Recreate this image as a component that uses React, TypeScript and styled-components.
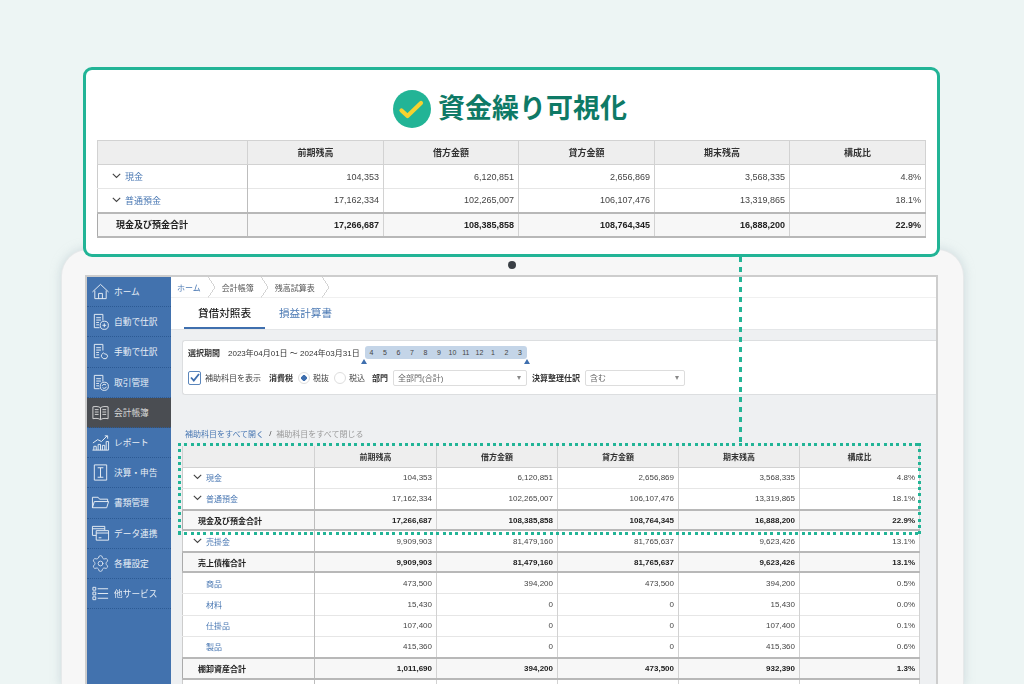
import styled, { createGlobalStyle } from 'styled-components';
import { Settings } from 'lucide-react';

const FONT = '"Liberation Sans", "Noto Sans CJK JP", sans-serif';
const TEAL = '#22b496';
const BLUE = '#4a78b3';

type Row = {
  kind: 'sub' | 'item' | 'total';
  label: string;
  values: string[];
};

const HEADERS = ['前期残高', '借方金額', '貸方金額', '期末残高', '構成比'];

const ROWS: Row[] = [
  { kind: 'sub', label: '現金', values: ['104,353', '6,120,851', '2,656,869', '3,568,335', '4.8%'] },
  { kind: 'sub', label: '普通預金', values: ['17,162,334', '102,265,007', '106,107,476', '13,319,865', '18.1%'] },
  { kind: 'total', label: '現金及び預金合計', values: ['17,266,687', '108,385,858', '108,764,345', '16,888,200', '22.9%'] },
  { kind: 'sub', label: '売掛金', values: ['9,909,903', '81,479,160', '81,765,637', '9,623,426', '13.1%'] },
  { kind: 'total', label: '売上債権合計', values: ['9,909,903', '81,479,160', '81,765,637', '9,623,426', '13.1%'] },
  { kind: 'item', label: '商品', values: ['473,500', '394,200', '473,500', '394,200', '0.5%'] },
  { kind: 'item', label: '材料', values: ['15,430', '0', '0', '15,430', '0.0%'] },
  { kind: 'item', label: '仕掛品', values: ['107,400', '0', '0', '107,400', '0.1%'] },
  { kind: 'item', label: '製品', values: ['415,360', '0', '0', '415,360', '0.6%'] },
  { kind: 'total', label: '棚卸資産合計', values: ['1,011,690', '394,200', '473,500', '932,390', '1.3%'] },
];

const MONTHS = [4, 5, 6, 7, 8, 9, 10, 11, 12, 1, 2, 3];

const NavSvg = styled('svg')`
  flex: 0 0 19px;
  width: 19px;
  height: 19px;
`;

const GearIcon = styled(Settings)`
  flex: 0 0 19px;
`;

function Svg({ children }: { children: React.ReactNode }) {
  return (
    <NavSvg viewBox="0 0 20 20" fill="none" stroke="currentColor" strokeWidth="1">
      {children}
    </NavSvg>
  );
}

const DOC = 'M12.5 9V2.5h-9v14h5.5M5.5 6h5M5.5 8.5h5M5.5 11h3M5.5 13.5h3';

const NAV: { label: string; icon: React.ReactNode }[] = [
  {
    label: 'ホーム',
    icon: (
      <Svg>
        <path d="M1.5 10.5 10 2.5l8.5 8M4 9v8.5h12V9M8 17.5V12h4v5.5" />
      </Svg>
    ),
  },
  {
    label: '自動で仕訳',
    icon: (
      <Svg>
        <path d={DOC} />
        <circle cx="14" cy="14" r="4.3" />
        <path d="M14 12v4M12 14h4" />
      </Svg>
    ),
  },
  {
    label: '手動で仕訳',
    icon: (
      <Svg>
        <path d={DOC} />
        <path d="M11 13.5l2-2 1.5 1 2 .5 1 2-1.5 2.5h-3l-2-2z" />
      </Svg>
    ),
  },
  {
    label: '取引管理',
    icon: (
      <Svg>
        <path d={DOC} />
        <circle cx="14" cy="14" r="4.3" />
        <path d="M11.8 13.5a2.3 2.3 0 0 1 4-.8M16.2 14.5a2.3 2.3 0 0 1-4 .8" />
      </Svg>
    ),
  },
  {
    label: '会計帳簿',
    icon: (
      <Svg>
        <path d="M10 5C8 3.5 5 3.5 2 4v12.5c3-.5 6-.5 8 1 2-1.5 5-1.5 8-1V4c-3-.5-6-.5-8 1zM10 5v12.5" />
        <path d="M4 7h4M4 9.5h4M4 12h4M12 7h4M12 9.5h4M12 12h4" />
      </Svg>
    ),
  },
  {
    label: 'レポート',
    icon: (
      <Svg>
        <path d="M1.5 18h17M3 18v-4h2.5v4M7.5 18v-6H10v6M12 18v-5h2.5v5M16 18V9h2.5v9" />
        <path d="M2 10.5l5-3.5 4 2 6-6M14.5 3H17.5V6" />
      </Svg>
    ),
  },
  {
    label: '決算・申告',
    icon: (
      <Svg>
        <path d="M3.5 2h13v16h-13zM7 5h6M10 5v10M7 15h6" />
      </Svg>
    ),
  },
  {
    label: '書類管理',
    icon: (
      <Svg>
        <path d="M1.5 15.5V4.5h6l1.5 2h8.5V9M1.5 15.5l2-6.5h15l-2 6.5z" />
      </Svg>
    ),
  },
  {
    label: 'データ連携',
    icon: (
      <Svg>
        <path d="M14.5 6.5V2.5h-13v9.5h4M1.5 5h13" />
        <path d="M5.5 7h13v10h-13zM5.5 9.5h13M8 14.5h3" />
      </Svg>
    ),
  },
  {
    label: '各種設定',
    icon: <GearIcon size={19} strokeWidth={1} />,
  },
  {
    label: '他サービス',
    icon: (
      <Svg>
        <path d="M2 3.5h3v3H2zM2 8.5h3v3H2zM2 13.5h3v3H2zM7 5h11M7 10h11M7 15h11" />
      </Svg>
    ),
  },
];

const COLS_LARGE = [150, 136, 135, 136, 135, 136];
const COLS_SMALL = [132, 122, 121, 121, 121, 120];

function BalanceTable({ rows, large, extraRow }: { rows: Row[]; large?: boolean; extraRow?: boolean }) {
  return (
    <Table $large={large}>
      <colgroup>
        {(large ? COLS_LARGE : COLS_SMALL).map((w, i) => (
          <Col key={i} $w={w} />
        ))}
      </colgroup>
      <thead>
        <tr>
          <Head $large={large} />
          {HEADERS.map((h) => (
            <Head key={h} $large={large}>
              {h}
            </Head>
          ))}
        </tr>
      </thead>
      <tbody>
        {rows.map((r) => (
          <BodyRow key={r.label} $large={large} $total={r.kind === 'total'}>
            <LabelCell $kind={r.kind} $large={large}>
              {r.kind === 'sub' && (
                <Chevron viewBox="0 0 9 6" fill="none" stroke="#444" strokeWidth="1.1">
                  <path d="M.8 .8 4.5 4.5 8.2 .8" />
                </Chevron>
              )}
              {r.label}
            </LabelCell>
            {r.values.map((v, i) => (
              <Value key={i}>{v}</Value>
            ))}
          </BodyRow>
        ))}
        {extraRow && (
          <BodyRow $large={large}>
            <LabelCell $kind="item" />
            {HEADERS.map((h) => (
              <Value key={h} />
            ))}
          </BodyRow>
        )}
      </tbody>
    </Table>
  );
}

export default function App() {
  return (
    <Stage>
      <GlobalStyle />
      <Laptop>
        <Camera />
        <Screen>
          <Sidebar>
            {NAV.map((n) => (
              <NavItem key={n.label} $active={n.label === '会計帳簿'}>
                {n.icon}
                <span>{n.label}</span>
              </NavItem>
            ))}
          </Sidebar>
          <Content>
            <Breadcrumb>
              <Crumb $link>ホーム</Crumb>
              <CrumbArrow />
              <Crumb>会計帳簿</Crumb>
              <CrumbArrow />
              <Crumb>残高試算表</Crumb>
              <CrumbArrow />
            </Breadcrumb>
            <Tabs>
              <Tab $active>貸借対照表</Tab>
              <Tab>損益計算書</Tab>
            </Tabs>
            <Body>
              <Filter>
                <FilterRow>
                  <Strong>選択期間</Strong>
                  <Period>2023年04月01日 〜 2024年03月31日</Period>
                  <Slider>
                    {MONTHS.map((m) => (
                      <Month key={m}>{m}</Month>
                    ))}
                    <Handle $side="left" />
                    <Handle $side="right" />
                  </Slider>
                </FilterRow>
                <OptionRow>
                  <CheckBox>
                    <svg width="10" height="9" viewBox="0 0 10 9" fill="none" stroke="#3f6fae" strokeWidth="1.8">
                      <path d="M1 4.5 3.8 7.5 9 1" />
                    </svg>
                  </CheckBox>
                  <OptionLabel>補助科目を表示</OptionLabel>
                  <TaxLabel>消費税</TaxLabel>
                  <Radio $on />
                  <OptionLabel>税抜</OptionLabel>
                  <Radio />
                  <OptionLabel>税込</OptionLabel>
                  <DeptLabel>部門</DeptLabel>
                  <Select $w={134}>
                    全部門(合計)
                    <Caret />
                  </Select>
                  <Strong>決算整理仕訳</Strong>
                  <Select $w={100} $last>
                    含む
                    <Caret />
                  </Select>
                </OptionRow>
              </Filter>
              <Links>
                <LinkText>補助科目をすべて開く</LinkText>
                <Slash>/</Slash>
                <MutedLink>補助科目をすべて閉じる</MutedLink>
              </Links>
              <BalanceTable rows={ROWS} extraRow />
            </Body>
          </Content>
        </Screen>
      </Laptop>

      <Connector />
      <DottedBox />

      <Callout>
        <Title>
          <svg width="38" height="38" viewBox="0 0 38 38">
            <circle cx="19" cy="19" r="19" fill={TEAL} />
            <path
              d="M8.5 20.5 14.5 26 28 13"
              fill="none"
              stroke="#f6d22f"
              strokeWidth="4.2"
              strokeLinecap="round"
              strokeLinejoin="round"
            />
          </svg>
          <TitleText>資金繰り可視化</TitleText>
        </Title>
        <SoftTable>
          <BalanceTable rows={ROWS.slice(0, 3)} large />
        </SoftTable>
      </Callout>
    </Stage>
  );
}

const GlobalStyle = createGlobalStyle`
  html, body {
    margin: 0;
    padding: 0;
    overflow: hidden;
    background: #edf5f4;
  }
  * {
    box-sizing: border-box;
  }
`;

const Stage = styled('div')`
  position: relative;
  display: flex;
  flex-direction: column;
  width: 1024px;
  height: 684px;
  padding: 250px 61px 0 62px;
  overflow: hidden;
  background: #edf5f4;
  font-family: ${FONT};
  color: #333;
`;

const Laptop = styled('div')`
  position: relative;
  flex: 1;
  min-height: 0;
  padding: 25px 25px 0 23px;
  background: #f7f7f7;
  border-radius: 26px 26px 0 0;
  box-shadow: 0 0 0 1px #e6e9ea, 0 0 10px 2px rgba(190, 205, 210, 0.6);
`;

const Camera = styled('div')`
  position: absolute;
  top: 11px;
  left: 446px;
  width: 8px;
  height: 8px;
  border-radius: 50%;
  background: #3a3f45;
`;

/* the reference is a scaled-down screenshot, so its small text is slightly soft */
const Screen = styled('div')`
  display: flex;
  height: 100%;
  border: 2px solid #cdcdcd;
  border-bottom: none;
  background: #fff;
  filter: blur(0.3px);
`;

const SoftTable = styled('div')`
  filter: blur(0.25px);
`;

const Sidebar = styled('nav')`
  flex: 0 0 84px;
  background: #4272ae;
`;

const NavItem = styled('div')<{ $active?: boolean }>`
  display: flex;
  align-items: center;
  gap: 4px;
  height: 30.2px;
  padding-left: 4px;
  font-size: 8.7px;
  white-space: nowrap;
  color: ${(p) => (p.$active ? '#d8d8d8' : '#e9eff6')};
  background: ${(p) => (p.$active ? '#4a4d52' : 'transparent')};
  border-bottom: 1px dotted #2c5a94;
`;

const Content = styled('div')`
  flex: 1;
  min-width: 0;
  display: flex;
  flex-direction: column;
`;

const Breadcrumb = styled('div')`
  display: flex;
  align-items: center;
  height: 21px;
  padding-left: 6px;
  font-size: 8px;
  border-bottom: 1px solid #f0f0f0;
`;

const Crumb = styled('span')<{ $link?: boolean }>`
  color: ${(p) => (p.$link ? BLUE : '#555')};
`;

const CrumbArrow = styled('span')`
  width: 7px;
  height: 21px;
  margin: 0 7px 0 7px;
  background: linear-gradient(to bottom right, transparent 48%, #d4d4d4 48%, #d4d4d4 54%, transparent 54%) bottom / 100% 50% no-repeat,
    linear-gradient(to top right, transparent 48%, #d4d4d4 48%, #d4d4d4 54%, transparent 54%) top / 100% 50% no-repeat;
`;

const Tabs = styled('div')`
  display: flex;
  height: 31px;
  padding-left: 13px;
`;

const Tab = styled('div')<{ $active?: boolean }>`
  display: flex;
  align-items: center;
  justify-content: center;
  width: 81px;
  font-size: 10.6px;
  font-weight: ${(p) => (p.$active ? 500 : 400)};
  color: ${(p) => (p.$active ? '#222' : BLUE)};
  border-bottom: 2px solid ${(p) => (p.$active ? '#3f6fae' : 'transparent')};
`;

const Body = styled('div')`
  flex: 1;
  min-height: 0;
  padding: 10px 0 0 11px;
  background: #eef0f2;
  border-top: 1px solid #e4e6e8;
`;

const Filter = styled('div')`
  height: 55px;
  padding: 5px 0 0 5px;
  background: #fff;
  border: 1px solid #dcdee0;
  border-right: none;
  border-radius: 3px 0 0 3px;
`;

const FilterRow = styled('div')`
  display: flex;
  align-items: center;
  height: 13px;
  font-size: 8px;
`;

const Strong = styled('span')`
  font-size: 8px;
  font-weight: 700;
  color: #333;
  white-space: nowrap;
`;

const Period = styled('span')`
  margin-left: 8px;
  color: #333;
  white-space: nowrap;
`;

const Slider = styled('div')`
  position: relative;
  display: flex;
  align-items: center;
  width: 162px;
  height: 13px;
  margin-left: 5px;
  background: #c4d5e8;
  border-radius: 3px;
`;

const Month = styled('span')`
  flex: 1;
  text-align: center;
  font-size: 7px;
  color: #444;
`;

const Handle = styled('span')<{ $side: 'left' | 'right' }>`
  position: absolute;
  top: 13px;
  ${(p) => p.$side}: -3.5px;
  width: 0;
  height: 0;
  border-left: 3.5px solid transparent;
  border-right: 3.5px solid transparent;
  border-bottom: 5px solid #3f6fae;
`;

const OptionRow = styled('div')`
  display: flex;
  align-items: center;
  height: 17px;
  margin-top: 10px;
  font-size: 8px;
`;

const CheckBox = styled('span')`
  display: flex;
  align-items: center;
  justify-content: center;
  width: 13px;
  height: 14px;
  margin-right: 4px;
  border: 1px solid #5b86bb;
  border-radius: 2px;
  background: #fff;
`;

const OptionLabel = styled('span')`
  color: #444;
  white-space: nowrap;
`;

const TaxLabel = styled(Strong)`
  margin-left: 8px;
`;

const DeptLabel = styled(Strong)`
  margin-left: 7px;
  margin-right: 5px;
`;

const Radio = styled('span')<{ $on?: boolean }>`
  width: 12px;
  height: 12px;
  margin: 0 3px 0 5px;
  border: 1px solid #dedede;
  border-radius: 50%;
  background: ${(p) => (p.$on ? 'radial-gradient(circle, #3f6fae 0 2.6px, #fff 3px)' : '#fff')};
`;

const Select = styled('span')<{ $w: number; $last?: boolean }>`
  position: relative;
  display: flex;
  align-items: center;
  width: ${(p) => p.$w}px;
  height: 16px;
  margin: 0 ${(p) => (p.$last ? 0 : 5)}px 0 ${(p) => (p.$last ? 5 : 0)}px;
  padding-left: 4px;
  color: #666;
  background: #fff;
  border: 1px solid #ddd;
  border-radius: 2px;
`;

const Caret = styled('span')`
  position: absolute;
  top: 5px;
  right: 5px;
  width: 0;
  height: 0;
  border-left: 2.5px solid transparent;
  border-right: 2.5px solid transparent;
  border-top: 4px solid #888;
`;

const Links = styled('div')`
  display: flex;
  align-items: center;
  gap: 4px;
  height: 11px;
  margin: 33px 0 7px 3px;
  font-size: 8px;
`;

const LinkText = styled('span')`
  color: ${BLUE};
`;

const Slash = styled('span')`
  margin: 0 1px;
  color: #444;
`;

const MutedLink = styled('span')`
  color: #9a9a9a;
`;

const Table = styled('table')<{ $large?: boolean }>`
  width: ${(p) => (p.$large ? 828 : 737)}px;
  table-layout: fixed;
  border-collapse: collapse;
  font-size: ${(p) => (p.$large ? 9 : 8)}px;
  background: #fff;
  border-left: 1px solid #ccc;
  border-right: 1px solid #ccc;
`;

const Col = styled('col')<{ $w: number }>`
  width: ${(p) => p.$w}px;
`;

const Head = styled('th')<{ $large?: boolean }>`
  height: ${(p) => (p.$large ? 24 : 21)}px;
  padding: 0;
  font-weight: 700;
  text-align: center;
  color: #333;
  background: #eeeeee;
  border: 1px solid #d2d2d2;
  border-width: ${(p) => (p.$large ? 1 : 0)}px 1px 1px 1px;
`;

const BodyRow = styled('tr')<{ $large?: boolean; $total?: boolean }>`
  height: ${(p) => (p.$large ? 24 : p.$total ? 20.6 : 21.4)}px;
  background: ${(p) => (p.$total ? '#f7f7f7' : '#fff')};
  font-weight: ${(p) => (p.$total ? 700 : 400)};
  border-top: ${(p) => (p.$total ? '2px solid #b8b8b8' : '1px solid #e6e6e6')};
  border-bottom: ${(p) => (p.$total ? '2px solid #b8b8b8' : '1px solid #e6e6e6')};
  border-left: ${(p) => (p.$total ? '1px solid #aaa' : 'none')};
  border-right: ${(p) => (p.$total ? '1px solid #aaa' : 'none')};
  color: ${(p) => (p.$total ? '#222' : '#444')};
`;

const LabelCell = styled('td')<{ $kind: Row['kind']; $large?: boolean }>`
  padding: 0 0 0 ${(p) => (p.$kind === 'total' ? (p.$large ? 18 : 15) : p.$kind === 'item' ? 23 : p.$large ? 14 : 10)}px;
  color: ${(p) => (p.$kind === 'total' ? '#222' : BLUE)};
  white-space: nowrap;
  border-right: 1px solid #bdbdbd;
`;

const Chevron = styled('svg')`
  width: 9px;
  height: 6px;
  margin-right: 4px;
  vertical-align: 1px;
`;

const Value = styled('td')`
  padding: 0 4px 0 0;
  text-align: right;
  border-right: 1px solid #d2d2d2;
`;

const Callout = styled('section')`
  position: absolute;
  top: 67px;
  left: 83px;
  width: 857px;
  height: 190px;
  padding: 0 11px;
  background: #fff;
  border: 3px solid ${TEAL};
  border-radius: 9px;
`;

const Title = styled('div')`
  display: flex;
  align-items: center;
  justify-content: center;
  gap: 7px;
  height: 70px;
  padding: 8px 3px 0 0;
`;

const TitleText = styled('h1')`
  margin: 0;
  font-size: 27px;
  font-weight: 700;
  line-height: 38px;
  color: #0e7a66;
`;

const Connector = styled('div')`
  position: absolute;
  top: 257px;
  left: 739px;
  width: 3px;
  height: 186px;
  background: repeating-linear-gradient(180deg, ${TEAL} 0 5px, transparent 5px 10px);
`;

const DottedBox = styled('div')`
  position: absolute;
  top: 443px;
  left: 178px;
  width: 743px;
  height: 92px;
  background: repeating-linear-gradient(90deg, ${TEAL} 0 3px, transparent 3px 6.3px) top / 100% 3px no-repeat,
    repeating-linear-gradient(90deg, ${TEAL} 0 3px, transparent 3px 6.3px) bottom / 100% 3px no-repeat,
    repeating-linear-gradient(180deg, ${TEAL} 0 3px, transparent 3px 6.3px) left / 3px 100% no-repeat,
    repeating-linear-gradient(180deg, ${TEAL} 0 3px, transparent 3px 6.3px) right / 3px 100% no-repeat;
`;
